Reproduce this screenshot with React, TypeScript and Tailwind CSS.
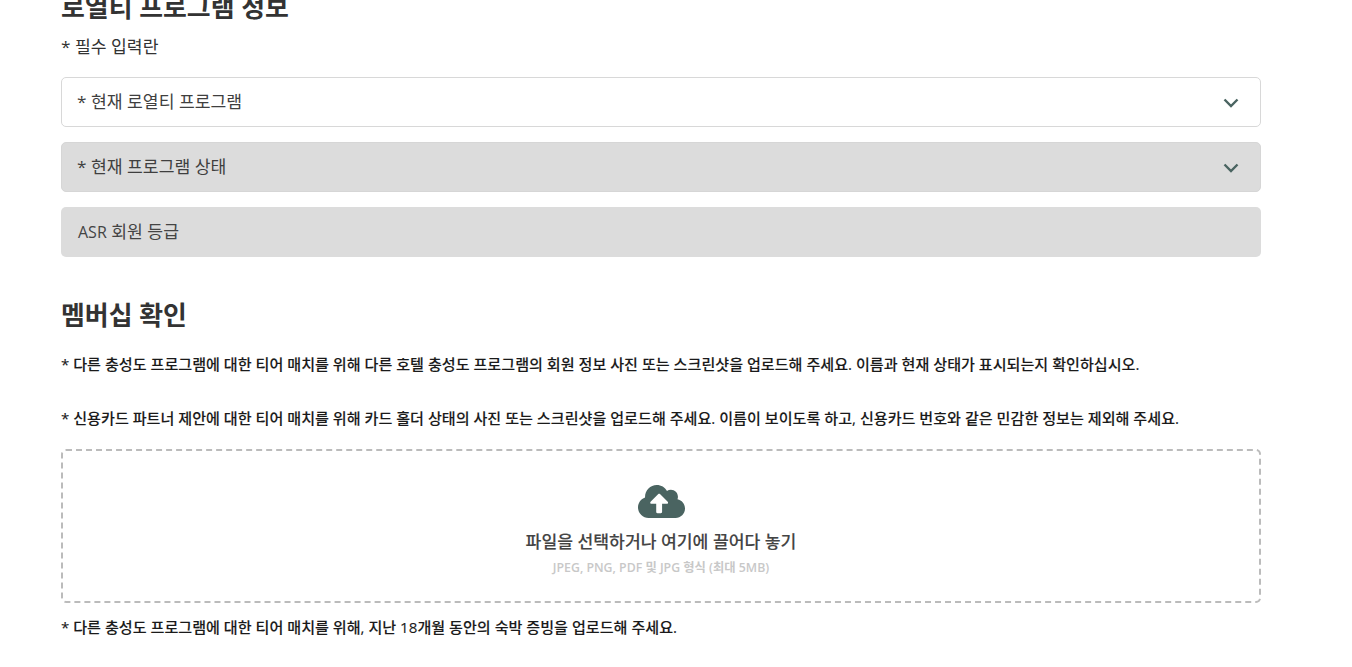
import { FaCloudUploadAlt } from 'react-icons/fa';

const fontStack = 'font-["Open_Sans","Noto_Sans_CJK_KR",sans-serif]';

function Chevron() {
  return (
    <svg width="16" height="10" viewBox="0 0 16 10" fill="none" className="mt-[1px] shrink-0">
      <path d="M1.5 1.5L8 8L14.5 1.5" stroke="#4a6461" strokeWidth="2.4" />
    </svg>
  );
}

function SelectField({ label, disabled }: { label: string; disabled?: boolean }) {
  return (
    <div
      className={`flex h-[50px] items-center justify-between rounded-[5px] border pl-[15px] pr-[21px] ${
        disabled ? 'border-[#d6d6d6] bg-[#dcdcdc]' : 'border-[#d8d8d8] bg-white'
      }`}
    >
      <span className="text-[17.2px] text-[#3f3f3f]">{label}</span>
      <Chevron />
    </div>
  );
}

export default function App() {
  return (
    <div className={`h-[667px] w-[1352px] overflow-hidden bg-white ${fontStack}`}>
      <div className="-mt-[9px] ml-[61px] w-[1200px]">
        <h2 className="text-[25.9px] leading-[32px] font-bold text-[#333333]">로열티 프로그램 정보</h2>
        <p className="mt-[12px] text-[17.2px] leading-[24px] text-[#333333]">* 필수 입력란</p>

        {/* Program fields */}
        <div className="mt-[18px] flex flex-col gap-[15px]">
          <SelectField label="* 현재 로열티 프로그램" />
          <SelectField label="* 현재 프로그램 상태" disabled />
          <div className="flex h-[50px] items-center rounded-[5px] bg-[#dcdcdc] pl-[17px] text-[17.2px] text-[#444444]">
            <span className="text-base">ASR</span>&nbsp;회원 등급
          </div>
        </div>

        <h2 className="mt-[42px] text-[25.9px] leading-[32px] font-bold text-[#333333]">멤버십 확인</h2>
        <p className="mt-[23px] text-[15.1px] leading-[20px] font-medium text-[#1a1a1a] [-webkit-text-stroke:0.1px_#1a1a1a]">
          * 다른 충성도 프로그램에 대한 티어 매치를 위해 다른 호텔 충성도 프로그램의 회원 정보 사진 또는 스크린샷을 업로드해 주세요. 이름과 현재 상태가 표시되는지 확인하십시오.
        </p>
        <p className="mt-[34px] text-[15.1px] leading-[20px] font-medium text-[#1a1a1a] [-webkit-text-stroke:0.1px_#1a1a1a]">
          * 신용카드 파트너 제안에 대한 티어 매치를 위해 카드 홀더 상태의 사진 또는 스크린샷을 업로드해 주세요. 이름이 보이도록 하고, 신용카드 번호와 같은 민감한 정보는 제외해 주세요.
        </p>

        {/* Upload box */}
        <div className="mt-[21px] flex h-[154px] flex-col items-center rounded-[5px] border-2 border-dashed border-[#bbbbbb] pt-[27px]">
          <FaCloudUploadAlt className="text-[#4a6461]" size={47} />
          <p className="mt-[5px] text-[17.2px] leading-[24px] font-medium text-[#444444] [-webkit-text-stroke:0.1px_#444444]">파일을 선택하거나 여기에 끌어다 놓기</p>
          <p className="mt-[5px] text-[12.3px] leading-[18px] font-semibold text-[#c8c8c8]">JPEG, PNG, PDF 및 JPG 형식 (최대 5MB)</p>
        </div>

        <p className="mt-[14px] text-[15.1px] leading-[20px] font-medium text-[#1a1a1a] [-webkit-text-stroke:0.1px_#1a1a1a]">
          * 다른 충성도 프로그램에 대한 티어 매치를 위해, 지난 18개월 동안의 숙박 증빙을 업로드해 주세요.
        </p>
      </div>
    </div>
  );
}
